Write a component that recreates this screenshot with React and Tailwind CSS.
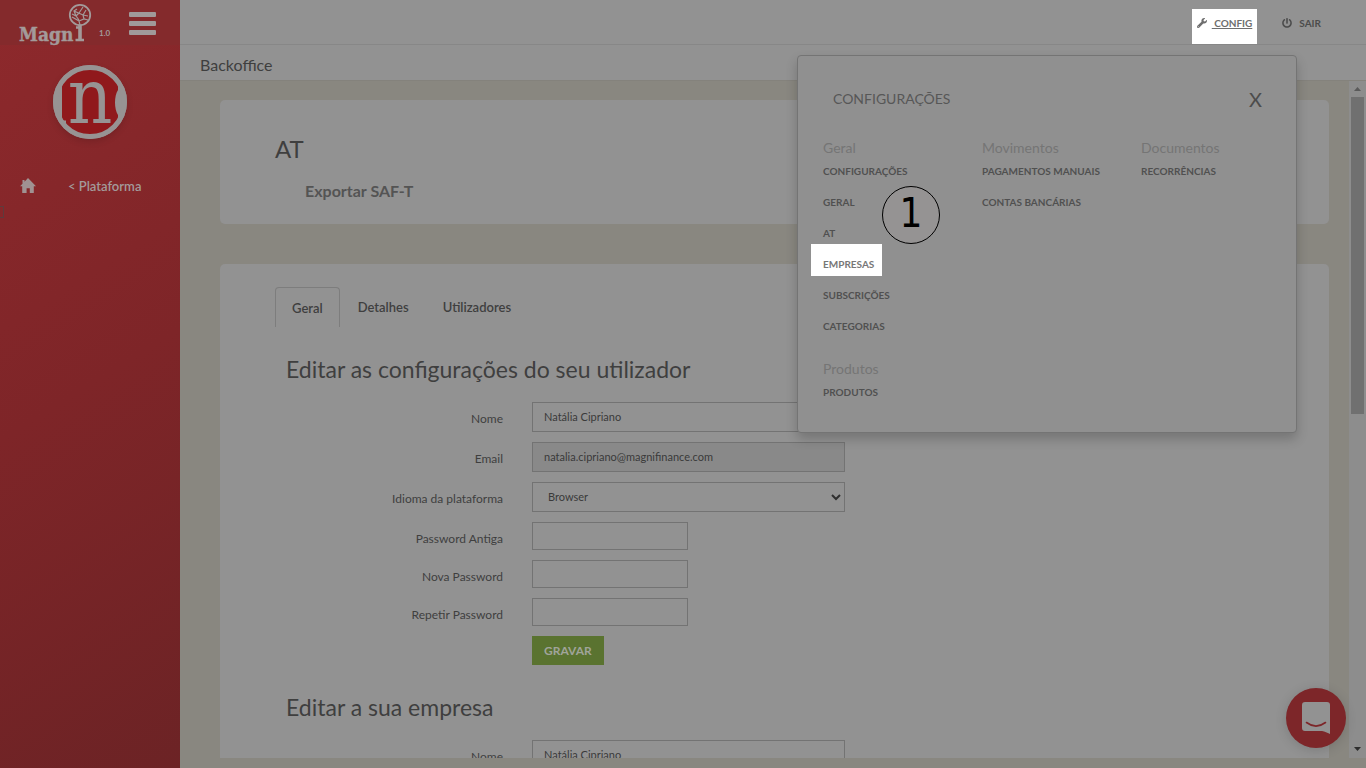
import { FaWrench, FaPowerOff } from "react-icons/fa";

const menuColumns = [
  [
    { title: "Geral", items: ["Configurações", "Geral", "AT", "Empresas", "Subscrições", "Categorias"] },
    { title: "Produtos", items: ["Produtos"] },
  ],
  [{ title: "Movimentos", items: ["Pagamentos manuais", "Contas bancárias"] }],
  [{ title: "Documentos", items: ["Recorrências"] }],
];

const fieldBase = "border border-[#737373] text-[11px] text-[#3a3a3a] outline-none";

function Row({ id, label, children }) {
  return (
    <div className="flex gap-[29px]">
      <label htmlFor={id} className="w-[217px] shrink-0 pt-2 text-right text-xs leading-[18px] text-[#3f3f3f]">
        {label}
      </label>
      {children}
    </div>
  );
}

function TextField({ id, label, value, disabled }) {
  return (
    <Row id={id} label={label}>
      <input
        id={id}
        type="text"
        defaultValue={value}
        disabled={disabled}
        className={`${fieldBase} h-[30px] w-[313px] px-[11px] pb-[2px] ${disabled ? "bg-[#898989]" : "bg-[#929292]"}`}
      />
    </Row>
  );
}

function PasswordField({ id, label }) {
  return (
    <Row id={id} label={label}>
      <input id={id} type="password" className={`${fieldBase} h-7 w-[156px] bg-[#929292] px-[11px]`} />
    </Row>
  );
}

function Logo() {
  return (
    <svg className="h-[46px] w-[92px]" viewBox="0 0 92 46" role="img" aria-label="Magni">
      <text x="19" y="41" fontFamily="DejaVu Serif Condensed, DejaVu Serif, serif" fontWeight="bold" fontSize="19" fill="#a39a9a" stroke="#a39a9a" strokeWidth="0.4">
        Magn
      </text>
      <g fill="none" stroke="#a39a9a">
        <circle cx="80" cy="15" r="10.200" strokeWidth="1.800" />
        <path d="M80 25v15" strokeWidth="3.600" />
        <path d="M75.500 40h8.500M76 27.500h4" strokeWidth="2.400" />
        <path d="M80 25l-1-4-7-4M79 20l-3-4-4-2M76 16l-2-5 3-2M74 11l9 4M79 13l4-6M83 15l3-5M83 15l5 1M79 21l5-2 4 1M84 19l-1-4M76 16l3-3" strokeWidth="1.200" />
      </g>
    </svg>
  );
}

function Avatar() {
  return (
    <svg className="h-[76px] w-[76px] overflow-visible drop-shadow-md" viewBox="0 0 76 76" role="img" aria-label="n">
      <defs>
        <clipPath id="avatar-clip">
          <circle cx="38" cy="38" r="34" />
        </clipPath>
      </defs>
      <circle cx="38" cy="38" r="37" fill="#979393" />
      <g clipPath="url(#avatar-clip)">
        <path d="M10 4H66V26C62 32 62 45 66 51V72H10Z" fill="#90191c" />
        <path d="M8 58h6" stroke="#979393" strokeWidth="3" />
      </g>
      <circle cx="38" cy="38" r="34.500" fill="none" stroke="#979393" strokeWidth="5" />
      <text x="38" y="59" textAnchor="middle" fontFamily="DejaVu Serif Condensed, DejaVu Serif, serif" fontSize="77" fill="#979393">
        n
      </text>
    </svg>
  );
}

function Sidebar() {
  return (
    <aside className="w-[180px] shrink-0 overflow-hidden bg-linear-[148deg] from-[#8e292c] via-[#7e2528] to-[#6c2325]">
      <div className="flex h-[45px] items-start bg-[#842a2c]">
        <Logo />
        <span className="w-[37px] pt-[27px] pl-[7px] text-[8px] leading-3 font-bold text-[#a39a9a]">1.0</span>
        <button aria-label="Menu" className="flex flex-col gap-1 pt-3">
          <span className="h-[5px] w-[27px] rounded-[1px] bg-[#a09a9a]" />
          <span className="h-[5px] w-[27px] rounded-[1px] bg-[#a09a9a]" />
          <span className="h-[5px] w-[27px] rounded-[1px] bg-[#a09a9a]" />
        </button>
      </div>
      <div className="flex justify-center pt-[19px]">
        <Avatar />
      </div>
      <nav className="mt-9 flex items-center pl-5">
        <a href="#inicio" aria-label="Início" className="w-12">
          <svg className="h-4 w-4" viewBox="0 0 16 16" fill="#a09292">
            <path d="M8 0 16 8.300h-2.200V15H9.800v-4.700H6.600V15H2.200V8.300H0L2.500 5.700V2h2v1.700Z" />
          </svg>
        </a>
        <a href="#plataforma" className="text-[13px] leading-5 font-semibold text-[#a39a9a]">
          &lt; Plataforma
        </a>
      </nav>
      <div className="mt-[10px] h-3 w-1 border border-l-0 border-[#5f3a3c]" />
    </aside>
  );
}

function ConfigMenu() {
  return (
    <div className="absolute top-[55px] right-[69px] z-10 w-[500px] rounded border border-[#747474] bg-[#909090] pb-[30px] shadow-[0_6px_12px_rgba(0,0,0,0.2)]">
      <div className="flex items-center justify-between pt-[27px] pr-[34px] pl-[35px]">
        <h2 className="text-sm leading-8 text-[#575757]">CONFIGURAÇÕES</h2>
        <button className="text-xl leading-8 text-[#4c4c4c]">X</button>
      </div>
      <div className="grid grid-cols-[159px_159px_1fr] pt-[23px] pl-[25px]">
        {menuColumns.map((groups, i) => (
          <div key={i} className="flex flex-col gap-[23px]">
            {groups.map((group) => (
              <section key={group.title}>
                <h3 className="text-sm leading-5 text-[#757575]">{group.title}</h3>
                <ul className="flex flex-col gap-[11px] pt-[3px]">
                  {group.items.map((item) => (
                    <li key={item} className="flex h-5 items-start">
                      <a
                        href={"#" + item}
                        className={
                          item === "Empresas"
                            ? "-mt-[10px] -ml-3 bg-white pt-[10px] pr-2 pb-[2px] pl-3 text-[10px] leading-5 font-bold text-[#777777] uppercase"
                            : "text-[10px] leading-5 font-bold text-[#505050] uppercase"
                        }
                      >
                        {item}
                      </a>
                    </li>
                  ))}
                </ul>
              </section>
            ))}
          </div>
        ))}
      </div>
      <div className="absolute top-[130px] left-[84px] flex h-[58px] w-[58px] items-center justify-center rounded-full border border-black bg-[#959393] pb-1 font-['DejaVu_Sans_Condensed','DejaVu_Sans',sans-serif] text-[40px] leading-none text-black">
        1
      </div>
    </div>
  );
}

export default function App() {
  return (
    <div className="relative flex h-screen overflow-hidden bg-[#898780] font-['Lato',sans-serif] text-[#3f3f3f]">
      <Sidebar />
      <div className="flex min-w-0 flex-1 flex-col">
        <header className="flex h-[45px] shrink-0 items-start justify-end border-b border-[#878787] bg-[#929292] pt-[9px] pr-[45px] text-[10px] font-bold">
          <a href="#config" className="mr-[25px] flex h-[35px] items-start gap-[5px] bg-white px-[5px] pt-[7px] leading-[14px] text-[#6e6e6e]">
            <FaWrench className="mt-[2px] h-[10px] w-[10px]" />
            <span className="underline">&nbsp;CONFIG</span>
          </a>
          <a href="#sair" className="flex items-start gap-[7px] pt-[7px] leading-[14px] text-[#4c4c4c]">
            <FaPowerOff className="mt-[2px] h-[10px] w-[10px]" />
            SAIR
          </a>
        </header>
        <div className="flex h-9 shrink-0 items-center border-b border-[#84827c] bg-[#929292] pt-1 pl-5">
          <h1 className="text-base">Backoffice</h1>
        </div>

        <div className="mb-[10px] flex min-h-0 flex-1">
          <main className="min-w-0 flex-1 overflow-hidden pt-[19px] pr-5 pl-10">
            <section className="h-[124px] rounded-[5px] bg-[#929292] pt-[33px] pl-[55px]">
              <h2 className="text-2xl leading-8">AT</h2>
              <a href="#saft" className="mt-4 ml-[30px] block text-base leading-5 font-bold text-[#545454]">
                Exportar SAF-T
              </a>
            </section>

            <section className="mt-10 rounded-[5px] bg-[#929292] px-[55px] pt-[23px] pb-10">
              <div role="tablist" className="flex gap-[2px] text-[13px] leading-5 font-semibold">
                <button role="tab" aria-selected="true" className="h-10 rounded-t border border-b-0 border-[#7d7d7d] px-4">
                  Geral
                </button>
                <button role="tab" aria-selected="false" className="h-10 px-4">Detalhes</button>
                <button role="tab" aria-selected="false" className="h-10 px-4">Utilizadores</button>
              </div>

              <form className="pt-[26px] pl-[11px]" onSubmit={(e) => e.preventDefault()}>
                <h2 className="text-[23px] leading-8">Editar as configurações do seu utilizador</h2>
                <div className="mt-[17px] flex flex-col gap-[10px]">
                  <TextField id="nome" label="Nome" value="Natália Cipriano" />
                  <TextField id="email" label="Email" value="natalia.cipriano@magnifinance.com" disabled />
                  <Row id="idioma" label="Idioma da plataforma">
                    <div className="relative">
                      <select id="idioma" className={`${fieldBase} block h-[30px] w-[313px] appearance-none bg-[#929292] px-[15px]`}>
                        <option>Browser</option>
                      </select>
                      <svg className="pointer-events-none absolute top-3 right-1 h-[7px] w-[10px]" viewBox="0 0 10 7" fill="none" stroke="#2f2f2f" strokeWidth="2">
                        <path d="M1 1l4 4 4-4" />
                      </svg>
                    </div>
                  </Row>
                  <PasswordField id="antiga" label="Password Antiga" />
                  <PasswordField id="nova" label="Nova Password" />
                  <PasswordField id="repetir" label="Repetir Password" />
                  <button className="ml-[246px] h-[29px] self-start bg-[#5a7330] px-3 text-xs font-bold text-[#a0a49a]">GRAVAR</button>
                </div>
                <h2 className="mt-[26px] text-[23px] leading-8">Editar a sua empresa</h2>
                <div className="mt-[17px]">
                  <TextField id="empresa" label="Nome" value="Natália Cipriano" />
                </div>
              </form>
            </section>
          </main>

          <div aria-hidden="true" className="flex w-[17px] shrink-0 flex-col items-center bg-[#8d8d8d]">
            <svg className="h-4 w-[17px] shrink-0" viewBox="0 0 17 16" fill="#5a5a5a">
              <path d="M5 10h7L8.500 6Z" />
            </svg>
            <div className="h-[317px] w-[13px] bg-[#707070]" />
            <svg className="mt-auto h-4 w-[17px] shrink-0" viewBox="0 0 17 16" fill="#2d2d2d">
              <path d="M5 5h7L8.500 9Z" />
            </svg>
          </div>
        </div>
      </div>

      <ConfigMenu />

      <button aria-label="Abrir chat" className="absolute right-5 bottom-5 flex h-[60px] w-[60px] items-center justify-center rounded-full bg-[#7d2629] shadow-[0_2px_12px_rgba(0,0,0,0.15)]">
        <svg className="h-8 w-7" viewBox="0 0 28 32">
          <path d="M3 0h22a3 3 0 0 1 3 3v29c-3-1.200-5-2.500-8-3H3a3 3 0 0 1-3-3V3a3 3 0 0 1 3-3Z" fill="#929292" />
          <path d="M4.500 20.500c6 4.500 13 4.500 19 0" fill="none" stroke="#7d2629" strokeWidth="1.600" strokeLinecap="round" />
        </svg>
      </button>
    </div>
  );
}
